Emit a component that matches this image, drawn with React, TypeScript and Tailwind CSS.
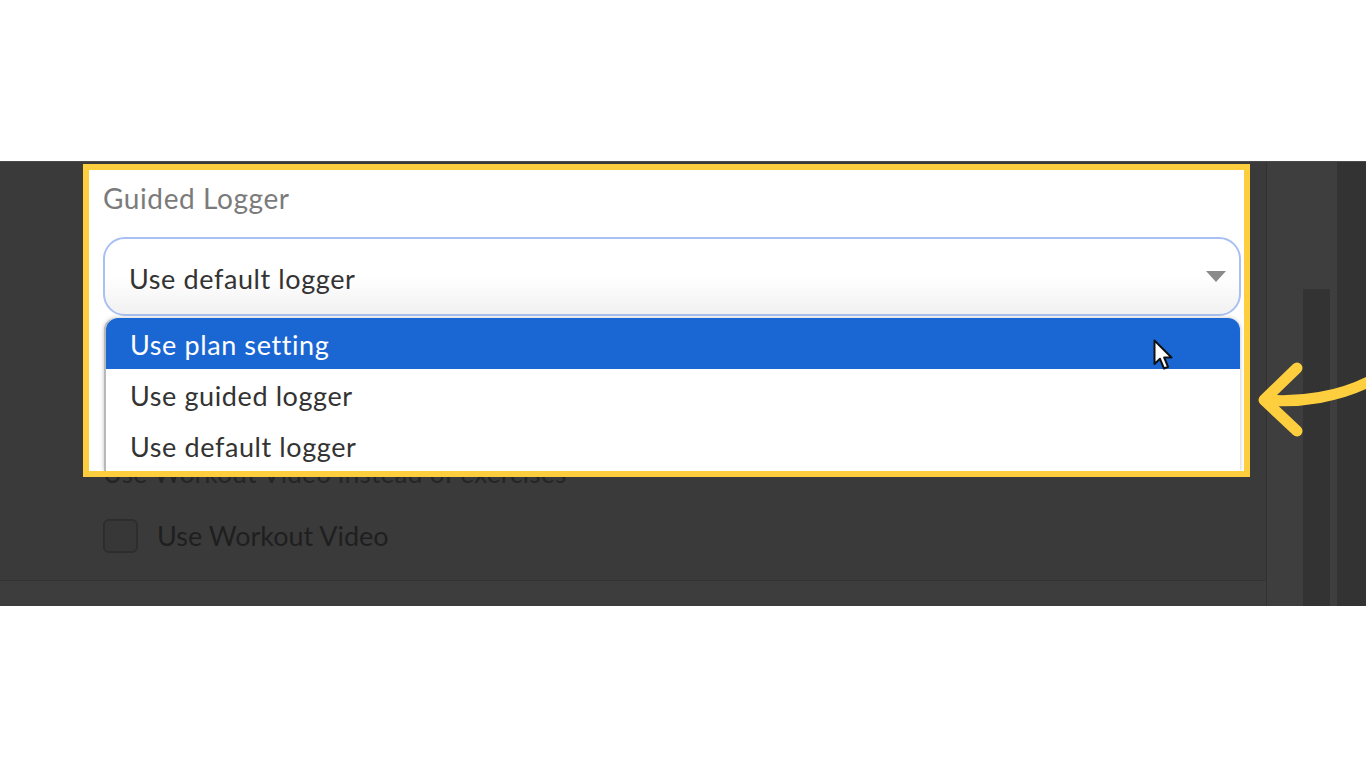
const options = ['Use plan setting', 'Use guided logger', 'Use default logger'];

function Cursor() {
  return (
    <svg width="22" height="33" viewBox="0 0 22 33" className="absolute left-[1047px] top-[21px]">
      <path
        d="M1.5 1.5 L1.5 25 L7 19.8 L11 29.5 L15 27.8 L11.2 18.5 L18.5 18.5 Z"
        fill="#ffffff"
        stroke="#111111"
        strokeWidth="2"
        strokeLinejoin="round"
      />
    </svg>
  );
}

function CalloutArrow() {
  return (
    <svg
      width="116"
      height="90"
      viewBox="1250 355 116 90"
      className="absolute left-[1250px] top-[194px] z-20"
    >
      <g fill="none" stroke="#fdcf3e" strokeWidth="11" strokeLinecap="round" strokeLinejoin="round">
        <path d="M1297 367 L1264 399 L1297 430" />
        <path d="M1265 399 C 1300 402, 1340 396, 1372 379" />
      </g>
    </svg>
  );
}

export default function App() {
  return (
    <div className="min-h-screen bg-white pt-[161px] font-['Lato',sans-serif]">
      <div className="relative h-[445px] bg-[#3a3a3a] border-t border-[#4a4a4a] flex">
        {/* dimmed settings page */}
        <div className="w-[1267px] flex flex-col border-r border-[#323232]">
          <div className="flex-1 pl-[83px] pt-[2px]">
            {/* highlighted area */}
            <div className="relative z-10 w-[1167px] h-[313px] border-[6px] border-[#fdcf3e] bg-white overflow-hidden">
              <p className="pl-[14px] pt-[12px] text-[28px] leading-[32px] tracking-[0.6px] text-[#7b7b7b]">Guided Logger</p>
              <div className="ml-[14px] mr-[3px] mt-[23px] h-[79px] rounded-[22px] border-2 border-[#a9c0f3] bg-gradient-to-b from-white from-50% to-[#f1f1f1] flex items-center justify-between pl-[24px] pr-[13px]">
                <span className="text-[27px] leading-[32px] tracking-[0.6px] text-[#333333] mt-[4px]">Use default logger</span>
                <svg width="20" height="11" viewBox="0 0 20 11">
                  <path d="M0 0 L20 0 L10 11 Z" fill="#8a8a8a" />
                </svg>
              </div>
              <div className="ml-[15px] mr-[4px] mt-[2px] rounded-t-[12px] bg-white border-l-2 border-[#b8b8b8] shadow-[0_0_4px_rgba(0,0,0,0.25)]">
                {options.map((opt, i) => (
                  <div
                    key={opt}
                    className={
                      i === 0
                        ? 'relative h-[51px] flex items-center pl-[24px] pt-[3px] rounded-t-[12px] bg-[#1a66d3] text-white text-[27px] tracking-[0.6px]'
                        : 'h-[51px] flex items-center pl-[24px] pt-[3px] text-[#333333] text-[27px] tracking-[0.6px]'
                    }
                  >
                    {opt}
                    {i === 0 && <Cursor />}
                  </div>
                ))}
              </div>
            </div>
            <p className="-mt-[20px] pl-[20px] text-[26px] leading-[32px] tracking-[0.3px] text-[#252525]">
              Use Workout Video instead of exercises
            </p>
            <div className="mt-[30px] pl-[20px] flex items-center gap-[19px]">
              <div className="w-[35px] h-[34px] rounded-[6px] border-2 border-[#2d2d2d] bg-[#373737]"></div>
              <span className="text-[27px] leading-[32px] text-[#1f1f1f]">Use Workout Video</span>
            </div>
          </div>
          <div className="h-[26px] border-t border-[#333333] bg-[#3d3d3d]"></div>
        </div>
        {/* right scroll area */}
        <div className="w-[36px] bg-[#3e3e3e]"></div>
        <div className="w-[27px] bg-[#3e3e3e] flex flex-col">
          <div className="h-[127px]"></div>
          <div className="flex-1 bg-[#333333]"></div>
        </div>
        <div className="w-[7px] bg-[#3e3e3e]"></div>
        <div className="flex-1 bg-[#333333]"></div>
        <CalloutArrow />
      </div>
    </div>
  );
}
